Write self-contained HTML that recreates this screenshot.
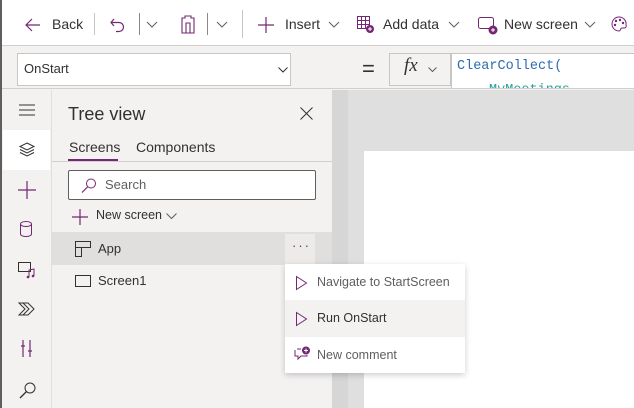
<!DOCTYPE html>
<html><head><meta charset="utf-8"><style>
*{margin:0;padding:0;box-sizing:border-box}
body{width:634px;height:408px;overflow:hidden;position:relative;font-family:"Segoe UI","Liberation Sans",sans-serif;background:#f3f2f1;color:#323130}
.a{position:absolute}
.t{font-size:14px;color:#323130;white-space:nowrap}
svg{position:absolute;overflow:visible}
</style></head><body>
<div class="a" style="left:0;top:0;width:2px;height:408px;background:#605e5c;z-index:9"></div>
<!-- toolbar -->
<div class="a" style="left:0;top:0;width:634px;height:46px;background:#fff;border-bottom:1px solid #d2d0ce"></div>
<svg style="left:25px;top:17px" width="16" height="16"><path d="M15 8H1M7 2L1 8l6 6" stroke="#742774" stroke-width="1.2" fill="none"/></svg>
<div class="a t" style="left:52px;top:16px">Back</div>
<div class="a" style="left:94px;top:13px;width:1px;height:22px;background:#c8c6c4"></div>
<svg style="left:110px;top:15px" width="16" height="18"><path d="M4 4L1 7.5 4 11M1 7.5h8a4.5 4.5 0 010 9H6" stroke="#742774" stroke-width="1.2" fill="none"/></svg>
<div class="a" style="left:139px;top:13px;width:1px;height:22px;background:#8a8886"></div>
<svg style="left:146px;top:21px" width="12" height="7"><path d="M1 1l5 5 5-5" stroke="#605e5c" fill="none"/></svg>
<svg style="left:180px;top:14px" width="16" height="20"><path d="M2 4h3v-2h6v2h3v15H2z M6 9h4v10H6z" stroke="#742774" stroke-width="1.1" fill="none"/></svg>
<div class="a" style="left:207px;top:13px;width:1px;height:22px;background:#8a8886"></div>
<svg style="left:216px;top:21px" width="12" height="7"><path d="M1 1l5 5 5-5" stroke="#605e5c" fill="none"/></svg>
<div class="a" style="left:242px;top:10px;width:1px;height:28px;background:#c8c6c4"></div>
<svg style="left:258px;top:17px" width="16" height="16"><path d="M8 0v16M0 8h16" stroke="#742774" stroke-width="1.2"/></svg>
<div class="a t" style="left:285px;top:16px">Insert</div>
<svg style="left:328px;top:21px" width="12" height="7"><path d="M1 1l5 5 5-5" stroke="#605e5c" fill="none"/></svg>
<svg style="left:357px;top:16px" width="18" height="18"><rect x="0.5" y="0.5" width="12" height="12" stroke="#742774" fill="none"/><path d="M4.5 0.5v12M8.5 0.5v12M0.5 4.5h12M0.5 8.5h12" stroke="#742774"/><circle cx="13" cy="13" r="4" fill="#742774"/><path d="M13 11v4M11 13h4" stroke="#fff"/></svg>
<div class="a t" style="left:383px;top:16px">Add data</div>
<svg style="left:448px;top:21px" width="12" height="7"><path d="M1 1l5 5 5-5" stroke="#605e5c" fill="none"/></svg>
<svg style="left:478px;top:17px" width="20" height="18"><rect x="0.5" y="0.5" width="15" height="11" rx="2" stroke="#742774" fill="none"/><circle cx="15" cy="13" r="4.5" fill="#742774"/><path d="M15 11v4M13 13h4" stroke="#fff"/></svg>
<div class="a t" style="left:504px;top:16px">New screen</div>
<svg style="left:584px;top:21px" width="12" height="7"><path d="M1 1l5 5 5-5" stroke="#605e5c" fill="none"/></svg>
<svg style="left:611px;top:16px" width="17" height="17"><path d="M8 1a7 7 0 100 14c2 0 1-3 3-3h2a2 2 0 002-3A7 7 0 008 1z" stroke="#742774" fill="none"/><circle cx="5" cy="5" r="1.2" fill="#742774"/><circle cx="9" cy="4" r="1.2" fill="#742774"/><circle cx="4" cy="9" r="1.2" fill="#742774"/><circle cx="12" cy="7" r="1.2" fill="#742774"/></svg>
<!-- formula bar -->
<div class="a" style="left:0;top:47px;width:634px;height:42px;background:#f3f2f1;border-bottom:1px solid #d2d0ce"></div>
<div class="a" style="left:17px;top:53px;width:274px;height:33px;background:#fff;border:1px solid #c8c6c4"></div>
<div class="a t" style="left:24px;top:61px;font-size:13px">OnStart</div>
<svg style="left:278px;top:67px" width="10" height="6"><path d="M0.5 0.5l4.5 4.5 4.5-4.5" stroke="#323130" fill="none"/></svg>
<div class="a" style="left:362px;top:56px;font-size:22px;color:#323130">=</div>
<div class="a" style="left:389px;top:53px;width:62px;height:33px;background:#f3f2f1;border:1px solid #c8c6c4"></div>
<div class="a" style="left:404px;top:55px;font-family:'Liberation Serif',serif;font-style:italic;font-size:19px;color:#323130">fx</div>
<svg style="left:428px;top:67px" width="9" height="5"><path d="M0.5 0.5l4 4 4-4" stroke="#605e5c" fill="none"/></svg>
<div class="a" style="left:451px;top:53px;width:183px;height:35px;background:#fff;border-top:1px solid #c8c6c4;border-left:1px solid #c8c6c4;overflow:hidden">
<div style="position:absolute;left:5px;top:1px;font-family:'Liberation Mono',monospace;font-size:13.5px;color:#2b6cb0;line-height:24px">ClearCollect(<br><span style="color:#2aa198;padding-left:32px">MyMeetings</span></div></div>
<!-- canvas -->
<div class="a" style="left:332px;top:90px;width:302px;height:318px;background:#dfdfdf"></div>
<div class="a" style="left:332px;top:90px;width:16px;height:318px;background:#d6d6d6"></div>
<div class="a" style="left:364px;top:151px;width:270px;height:257px;background:#fff"></div>
<!-- left rail -->
<div class="a" style="left:51px;top:90px;width:1px;height:318px;background:#e1dfdd"></div>
<svg style="left:19px;top:104px" width="16" height="12"><path d="M0 1h16M0 6h16M0 11h16" stroke="#323130"/></svg>
<div class="a" style="left:3px;top:130px;width:47px;height:40px;background:#fff"></div>
<svg style="left:19px;top:142px" width="16" height="16"><path d="M8 1l7 3.5-7 3.5-7-3.5z M1 7.5l7 3.5 7-3.5 M1 10.5l7 3.5 7-3.5" stroke="#323130" fill="none"/></svg>
<svg style="left:18px;top:181px" width="18" height="18"><path d="M9 0v18M0 9h18" stroke="#742774" stroke-width="1.2"/></svg>
<svg style="left:20px;top:221px" width="12" height="16"><ellipse cx="6" cy="3" rx="5.5" ry="2.5" stroke="#742774" fill="none"/><path d="M0.5 3v10a5.5 2.5 0 0011 0V3" stroke="#742774" fill="none"/></svg>
<svg style="left:18px;top:262px" width="18" height="16"><rect x="0.5" y="0.5" width="12" height="9" stroke="#323130" fill="none"/><path d="M11 15V8l5-1v7" stroke="#742774" fill="none"/><circle cx="10" cy="15" r="1.3" fill="#742774"/><circle cx="15" cy="14" r="1.3" fill="#742774"/></svg>
<svg style="left:18px;top:302px" width="17" height="14"><path d="M1 1h9l6 6-6 6H1l6-6z M5 1l6 6-6 6" stroke="#323130" fill="none"/></svg>
<svg style="left:21px;top:340px" width="12" height="18"><path d="M2 0v17M9 0v17M0 6h4M7 11h4" stroke="#742774" stroke-width="1.2"/></svg>
<svg style="left:19px;top:382px" width="17" height="17"><circle cx="11" cy="6" r="5" stroke="#323130" fill="none"/><path d="M7.5 9.5L1 16" stroke="#323130" stroke-width="1.3"/></svg>
<!-- tree panel -->
<div class="a" style="left:68px;top:104px;font-size:18px;color:#323130">Tree view</div>
<svg style="left:300px;top:107px" width="13" height="13"><path d="M0.5 0.5l12 12M12.5 0.5l-12 12" stroke="#323130"/></svg>
<div class="a t" style="left:69px;top:139px">Screens</div>
<div class="a t" style="left:136px;top:139px">Components</div>
<div class="a" style="left:68px;top:159px;width:50px;height:3px;background:#742774"></div>
<div class="a" style="left:52px;top:161px;width:280px;height:1px;background:#d2d0ce"></div>
<div class="a" style="left:68px;top:170px;width:248px;height:30px;background:#fff;border:1px solid #605e5c;border-radius:2px"></div>
<svg style="left:81px;top:178px" width="16" height="16"><circle cx="10" cy="5.5" r="4.5" stroke="#742774" fill="none"/><path d="M6.5 9L1 14.5" stroke="#742774" stroke-width="1.2"/></svg>
<div class="a t" style="left:105px;top:177px;font-size:13px;color:#605e5c">Search</div>
<svg style="left:72px;top:209px" width="16" height="16"><path d="M8 0v16M0 8h16" stroke="#742774" stroke-width="1.2"/></svg>
<div class="a t" style="left:96px;top:208px;font-size:12.5px;color:#323130">New screen</div>
<svg style="left:166px;top:213px" width="11" height="6"><path d="M0.5 0.5l5 5 5-5" stroke="#605e5c" fill="none"/></svg>
<div class="a" style="left:52px;top:232px;width:280px;height:33px;background:#e1dfdd"></div>
<div class="a" style="left:285px;top:234px;width:30px;height:30px;background:#edebe9"></div>
<div class="a" style="left:292px;top:238px;font-size:13px;color:#742774;letter-spacing:2px">···</div>
<svg style="left:75px;top:241px" width="16" height="16"><path d="M0.5 0.5h15v6H6.5v9h-6z M0.5 6.5h6" stroke="#323130" fill="none"/></svg>
<div class="a t" style="left:98px;top:241px;font-size:13px">App</div>
<svg style="left:75px;top:275px" width="16" height="12"><rect x="0.5" y="0.5" width="15" height="11" stroke="#323130" fill="none"/></svg>
<div class="a t" style="left:98px;top:273px;font-size:13px">Screen1</div>
<!-- context menu -->
<div class="a" style="left:285px;top:264px;width:180px;height:109px;background:#fff;box-shadow:0 2px 6px rgba(0,0,0,.2)"></div>
<div class="a" style="left:285px;top:300px;width:180px;height:37px;background:#f3f2f1"></div>
<svg style="left:296px;top:276px" width="11" height="14"><path d="M0.5 0.5l10 6.5-10 6.5z" stroke="#742774" fill="none"/></svg>
<div class="a t" style="left:317px;top:275px;font-size:12.5px;color:#605e5c">Navigate to StartScreen</div>
<svg style="left:296px;top:312px" width="11" height="14"><path d="M0.5 0.5l10 6.5-10 6.5z" stroke="#742774" fill="none"/></svg>
<div class="a t" style="left:317px;top:311px;font-size:12.5px">Run OnStart</div>
<svg style="left:294px;top:346px" width="16" height="16"><path d="M3 3h4M1 4v6h3v3l3-3h6V9" stroke="#742774" fill="none"/><circle cx="12" cy="4.5" r="4" fill="#742774"/><path d="M12 2.5v4M10 4.5h4" stroke="#fff"/></svg>
<div class="a t" style="left:317px;top:348px;font-size:12.5px;color:#605e5c">New comment</div>
</body></html>
